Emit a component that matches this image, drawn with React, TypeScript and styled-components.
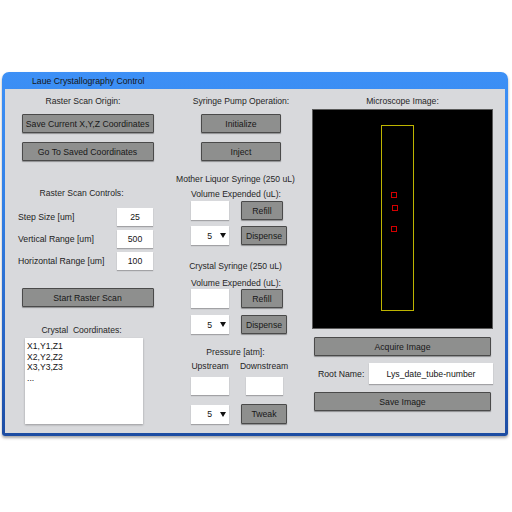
import React from "react";
import styled, { createGlobalStyle } from "styled-components";

const Global = createGlobalStyle`
  html, body { margin: 0; padding: 0; background: #ffffff; }
  body { font-family: "Liberation Sans", Arial, Helvetica, sans-serif; color: #1c1c1c; }
  * { box-sizing: border-box; }
`;

const Page = styled.div`
  padding: 72px 0 0 2px;
  width: 512px;
  height: 512px;
`;

const Window = styled.div`
  width: 506px;
  border-radius: 7px 7px 3px 3px;
  background: linear-gradient(180deg, #3d90f6 0%, #3280e6 35%, #2560c0 80%, #1c4ca2 100%);
  padding: 0 3px 3px 3px;
  box-shadow: 0 2px 3px rgba(0, 0, 0, 0.35);
`;

const TitleBar = styled.div`
  height: 17px;
  display: flex;
  align-items: center;
  padding-left: 27px;
  font-size: 8.7px;
  color: #161616;
`;

const Panel = styled.div`
  background: #d8d9dc;
  height: 344px;
  display: grid;
  grid-template-columns: 165px 142px 181px;
  align-items: start;
`;

const Column = styled.div`
  display: flex;
  flex-direction: column;
  align-items: center;
`;

const Heading = styled.div<{ $mt?: number; $pr?: number }>`
  align-self: stretch;
  text-align: center;
  font-size: 8.6px;
  line-height: 12px;
  height: 12px;
  white-space: nowrap;
  color: #262626;
  margin-top: ${(p) => p.$mt ?? 0}px;
  padding-right: ${(p) => p.$pr ?? 0}px;
`;

const Button = styled.button<{ $w: number; $h?: number; $mt?: number }>`
  width: ${(p) => p.$w}px;
  height: ${(p) => p.$h ?? 19}px;
  margin-top: ${(p) => p.$mt ?? 0}px;
  padding: 0;
  background: #8e8f8e;
  border: 1px solid #4a4a4a;
  border-radius: 1px;
  box-shadow: 0 1px 1px rgba(0, 0, 0, 0.35);
  font-family: inherit;
  font-size: 8.7px;
  color: #181818;
  white-space: nowrap;
  display: flex;
  align-items: center;
  justify-content: center;
`;

const Field = styled.div<{ $w: number; $h?: number }>`
  width: ${(p) => p.$w}px;
  height: ${(p) => p.$h ?? 18}px;
  background: #ffffff;
  box-shadow: 0 1px 1px rgba(0, 0, 0, 0.25);
  display: flex;
  align-items: center;
  justify-content: center;
  font-size: 8.7px;
  color: #151515;
  white-space: nowrap;
`;

const FieldList = styled.div`
  align-self: flex-start;
  margin: 9px 0 0 13px;
  width: 135px;
  display: grid;
  row-gap: 4px;
`;

const FieldRow = styled.div`
  display: flex;
  align-items: center;
  justify-content: space-between;
  font-size: 8.7px;
  color: #222222;
`;

const CoordList = styled.div`
  align-self: flex-start;
  margin: 2px 0 0 20px;
  width: 118px;
  height: 86px;
  background: #ffffff;
  box-shadow: 0 1px 2px rgba(0, 0, 0, 0.3);
  padding: 3px 2px;
  font-size: 8.6px;
  line-height: 10.7px;
  color: #151515;
`;

const PairRow = styled.div<{ $mt?: number }>`
  align-self: flex-start;
  margin: ${(p) => p.$mt ?? 0}px 0 0 21px;
  display: grid;
  grid-template-columns: 38px 46px;
  column-gap: 12px;
  align-items: center;
`;

const Cell = styled.div`
  display: flex;
  justify-content: center;
  font-size: 8.6px;
  line-height: 12px;
  white-space: nowrap;
  color: #262626;
`;

const LeftCell = styled.div`
  display: flex;
  justify-content: flex-start;
`;

const SelectBox = styled.div`
  width: 38px;
  height: 19px;
  background: #ffffff;
  box-shadow: 0 1px 1px rgba(0, 0, 0, 0.25);
  display: flex;
  align-items: center;
  justify-content: flex-end;
  gap: 8px;
  padding-right: 3px;
  font-size: 8.7px;
  color: #151515;
`;

const Caret = styled.span`
  width: 0;
  height: 0;
  border-left: 3.5px solid transparent;
  border-right: 3.5px solid transparent;
  border-top: 5px solid #111111;
`;

const Viewer = styled.div`
  margin-top: 2px;
  width: 181px;
  height: 220px;
  background: #000000;
  border: 1px solid #5a5a5a;
`;

const RootRow = styled.div<{ $mt?: number }>`
  margin-top: ${(p) => p.$mt ?? 0}px;
  width: 181px;
  padding-left: 6px;
  display: flex;
  align-items: center;
  justify-content: space-between;
  font-size: 8.7px;
  color: #222222;
`;

function Select() {
  return (
    <SelectBox>
      <span>5</span>
      <Caret />
    </SelectBox>
  );
}

export default function App() {
  return (
    <Page>
      <Global />
      <Window>
        <TitleBar>Laue Crystallography Control</TitleBar>
        <Panel>
          <Column>
            <Heading $mt={6} $pr={9}>Raster Scan Origin:</Heading>
            <Button $w={132} $mt={7}>Save Current X,Y,Z Coordinates</Button>
            <Button $w={132} $mt={9}>Go To Saved Coordinates</Button>
            <Heading $mt={26} $pr={12}>Raster Scan Controls:</Heading>
            <FieldList>
              <FieldRow>
                <span>Step Size [um]</span>
                <Field $w={36}>25</Field>
              </FieldRow>
              <FieldRow>
                <span>Vertical Range [um]</span>
                <Field $w={36}>500</Field>
              </FieldRow>
              <FieldRow>
                <span>Horizontal Range [um]</span>
                <Field $w={36}>100</Field>
              </FieldRow>
            </FieldList>
            <Button $w={132} $mt={18}>Start Raster Scan</Button>
            <Heading $mt={17} $pr={12}>Crystal&nbsp; Coordinates:</Heading>
            <CoordList>
              <div>X1,Y1,Z1</div>
              <div>X2,Y2,Z2</div>
              <div>X3,Y3,Z3</div>
              <div>...</div>
            </CoordList>
          </Column>

          <Column>
            <Heading $mt={6}>Syringe Pump Operation:</Heading>
            <Button $w={80} $mt={7}>Initialize</Button>
            <Button $w={80} $mt={9}>Inject</Button>
            <Heading $mt={12} $pr={11}>Mother Liquor Syringe (250 uL)</Heading>
            <Heading $mt={3} $pr={10}>Volume Expended (uL):</Heading>
            <PairRow $mt={1}>
              <Field $w={38} $h={19} />
              <LeftCell><Button $w={42}>Refill</Button></LeftCell>
            </PairRow>
            <PairRow $mt={6}>
              <Select />
              <LeftCell><Button $w={46}>Dispense</Button></LeftCell>
            </PairRow>
            <Heading $mt={15} $pr={11}>Crystal Syringe (250 uL)</Heading>
            <Heading $mt={5} $pr={10}>Volume Expended (uL):</Heading>
            <PairRow $mt={0}>
              <Field $w={38} $h={19} />
              <LeftCell><Button $w={42}>Refill</Button></LeftCell>
            </PairRow>
            <PairRow $mt={7}>
              <Select />
              <LeftCell><Button $w={46}>Dispense</Button></LeftCell>
            </PairRow>
            <Heading $mt={12} $pr={11}>Pressure [atm]:</Heading>
            <PairRow $mt={2}>
              <Cell>Upstream</Cell>
              <Cell>Downstream</Cell>
            </PairRow>
            <PairRow $mt={5}>
              <Field $w={38} $h={18} />
              <Cell><Field $w={37} $h={18} /></Cell>
            </PairRow>
            <PairRow $mt={9}>
              <Select />
              <LeftCell><Button $w={46} $h={20}>Tweak</Button></LeftCell>
            </PairRow>
          </Column>

          <Column>
            <Heading $mt={6}>Microscope Image:</Heading>
            <Viewer>
              <svg width="179" height="218" viewBox="0 0 179 218">
                <rect x="68.5" y="15.5" width="32" height="185" fill="none" stroke="#bdb400" strokeWidth="1" />
                <rect x="78.5" y="82.5" width="5" height="5" fill="none" stroke="#d40000" strokeWidth="1" />
                <rect x="79.5" y="95.5" width="5" height="5" fill="none" stroke="#d40000" strokeWidth="1" />
                <rect x="78.5" y="116.5" width="5" height="5" fill="none" stroke="#d40000" strokeWidth="1" />
              </svg>
            </Viewer>
            <Button $w={177} $mt={8}>Acquire Image</Button>
            <RootRow $mt={7}>
              <span>Root Name:</span>
              <Field $w={124} $h={21}>Lys_date_tube-number</Field>
            </RootRow>
            <Button $w={177} $mt={8}>Save Image</Button>
          </Column>
        </Panel>
      </Window>
    </Page>
  );
}
